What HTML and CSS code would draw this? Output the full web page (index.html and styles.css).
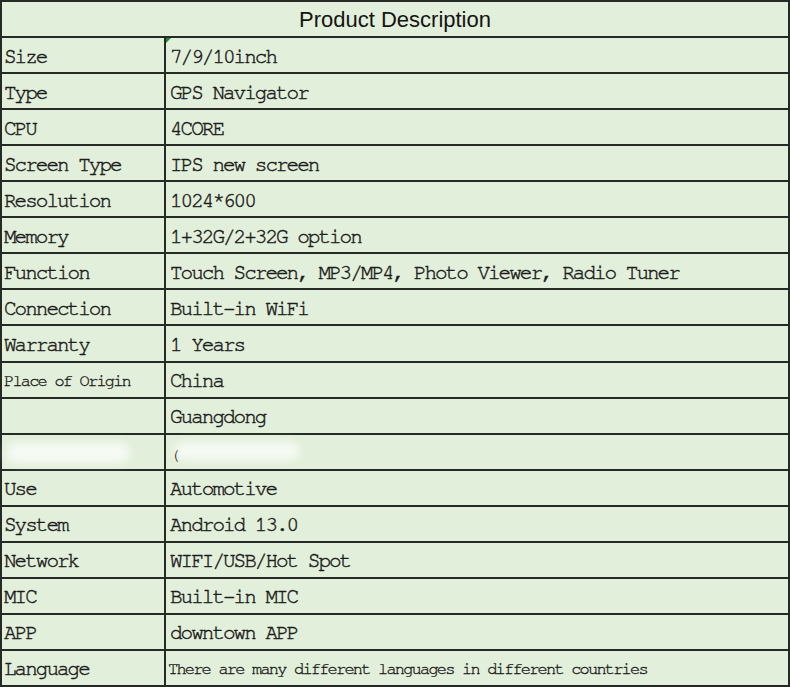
FILE: index.html
```html
<!DOCTYPE html>
<html>
<head>
<meta charset="utf-8">
<link rel="stylesheet" href="styles.css">
</head>
<body>
<div class="sheet">
  <div class="title">Product Description</div>
  <div class="row"><div class="key">Size</div><div class="val flagged">7/9/10inch<span class="marker"></span></div></div>
  <div class="row"><div class="key">Type</div><div class="val">GPS Navigator</div></div>
  <div class="row"><div class="key">CPU</div><div class="val">4CORE</div></div>
  <div class="row"><div class="key">Screen Type</div><div class="val">IPS new screen</div></div>
  <div class="row"><div class="key">Resolution</div><div class="val">1024*600</div></div>
  <div class="row"><div class="key">Memory</div><div class="val">1+32G/2+32G option</div></div>
  <div class="row"><div class="key">Function</div><div class="val">Touch Screen, MP3/MP4, Photo Viewer, Radio Tuner</div></div>
  <div class="row"><div class="key">Connection</div><div class="val">Built-in WiFi</div></div>
  <div class="row"><div class="key">Warranty</div><div class="val">1 Years</div></div>
  <div class="row"><div class="key small">Place of Origin</div><div class="val">China</div></div>
  <div class="row"><div class="key"></div><div class="val">Guangdong</div></div>
  <div class="row"><div class="key"><span class="smudge smudge-left"></span></div><div class="val"><span class="smudge smudge-right"></span><span class="paren">(</span></div></div>
  <div class="row"><div class="key">Use</div><div class="val">Automotive</div></div>
  <div class="row"><div class="key">System</div><div class="val">Android 13.0</div></div>
  <div class="row"><div class="key">Network</div><div class="val">WIFI/USB/Hot Spot</div></div>
  <div class="row"><div class="key">MIC</div><div class="val">Built-in MIC</div></div>
  <div class="row"><div class="key">APP</div><div class="val">downtown APP</div></div>
  <div class="row"><div class="key">Language</div><div class="val small tight">There are many different languages in different countries</div></div>
</div>
</body>
</html>
```
FILE: styles.css
```css
html, body {
  margin: 0;
  padding: 0;
  background: #e2efda;
}
.sheet {
  width: 790px;
  height: 687px;
  box-sizing: border-box;
  display: grid;
  grid-template-rows: repeat(19, 1fr);
  border-top: 2px solid #262a26;
  border-left: 2px solid #262a26;
  background: #e2efda;
}
.title {
  display: flex;
  align-items: center;
  justify-content: center;
  font-family: "Liberation Sans", Arial, sans-serif;
  font-size: 22px;
  color: #141414;
  border-right: 2px solid #262a26;
  border-bottom: 2px solid #262a26;
  padding-top: 1px;
}
.row {
  display: grid;
  grid-template-columns: 164px 1fr;
  min-height: 0;
}
.key, .val {
  display: flex;
  align-items: center;
  position: relative;
  border-right: 2px solid #262a26;
  border-bottom: 2px solid #262a26;
  font-family: "Nimbus Mono PS", "Nimbus Mono L", "FreeMono", "Courier 10 Pitch", "Liberation Mono", monospace;
  font-size: 21px;
  letter-spacing: -2px;
  -webkit-text-stroke: 0.45px #1c1c1c;
  color: #1c1c1c;
  white-space: nowrap;
  padding-top: 2px;
}
.key {
  padding-left: 2px;
}
.val {
  padding-left: 4px;
}
.small {
  font-size: 17px;
  letter-spacing: -1.8px;
  -webkit-text-stroke: 0.35px #1c1c1c;
}
.tight {
  padding-left: 2px;
}
.marker {
  position: absolute;
  left: 0;
  top: 0;
  width: 0;
  height: 0;
  border-top: 5px solid #1f8a3c;
  border-right: 5px solid transparent;
}
.smudge {
  position: absolute;
  background: rgba(255, 255, 255, 0.7);
  filter: blur(5px);
  border-radius: 10px;
}
.smudge-left {
  left: 4px;
  top: 8px;
  width: 124px;
  height: 20px;
}
.smudge-right {
  left: 8px;
  top: 7px;
  width: 126px;
  height: 18px;
}
.paren {
  position: relative;
  font-size: 17px;
  letter-spacing: 0;
  -webkit-text-stroke: 0;
  color: #3a2c1c;
  margin-top: 4px;
}
```
